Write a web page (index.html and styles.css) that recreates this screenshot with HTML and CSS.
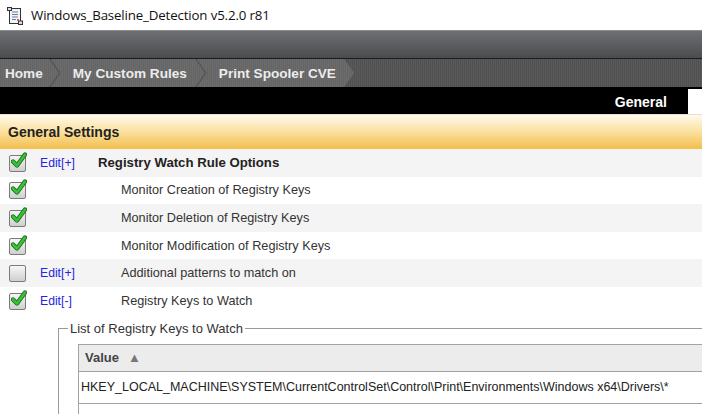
FILE: index.html
```html
<!DOCTYPE html>
<html>
<head>
<meta charset="utf-8">
<link rel="stylesheet" href="styles.css">
</head>
<body>
<div class="titlebar">
  <svg class="app-icon" width="16" height="18" viewBox="0 0 16 18">
    <rect x="2.5" y="1.5" width="11" height="15" fill="#f4f4f4" stroke="#333" stroke-width="1"/>
    <rect x="0.5" y="0.5" width="4" height="3" fill="#ddd" stroke="#333" stroke-width="1"/>
    <rect x="11.5" y="14" width="4" height="3.5" fill="#ddd" stroke="#333" stroke-width="1"/>
    <path d="M5 5h6M5 7.5h6M5 10h6M5 12.5h4" stroke="#6a7fa8" stroke-width="1"/>
    <circle cx="11" cy="13" r="1" fill="#c33"/>
  </svg>
  <span class="title">Windows_Baseline_Detection v5.2.0 r81</span>
</div>
<div class="toolbar"></div>
<nav class="crumbs">
  <span class="crumb first">Home</span>
  <span class="crumb">My Custom Rules</span>
  <span class="crumb">Print Spooler CVE</span>
</nav>
<div class="tabs">
  <span class="tab">General</span>
  <span class="tab-active"></span>
</div>
<div class="section-head">General Settings</div>
<div class="rows">
  <div class="row odd">
    <span class="check on"></span><span class="edit">Edit[+]</span><span class="label strong">Registry Watch Rule Options</span>
  </div>
  <div class="row">
    <span class="check on"></span><span class="edit"></span><span class="label indent">Monitor Creation of Registry Keys</span>
  </div>
  <div class="row odd">
    <span class="check on"></span><span class="edit"></span><span class="label indent">Monitor Deletion of Registry Keys</span>
  </div>
  <div class="row">
    <span class="check on"></span><span class="edit"></span><span class="label indent">Monitor Modification of Registry Keys</span>
  </div>
  <div class="row odd">
    <span class="check"></span><span class="edit">Edit[+]</span><span class="label indent">Additional patterns to match on</span>
  </div>
  <div class="row">
    <span class="check on"></span><span class="edit">Edit[-]</span><span class="label indent">Registry Keys to Watch</span>
  </div>
</div>
<fieldset class="keys">
  <legend>List of Registry Keys to Watch</legend>
  <div class="table">
    <div class="thead">Value <span class="sort">&#9650;</span></div>
    <div class="tcell">HKEY_LOCAL_MACHINE\SYSTEM\CurrentControlSet\Control\Print\Environments\Windows x64\Drivers\*</div>
    <div class="tcell empty"></div>
  </div>
</fieldset>
</body>
</html>
```
FILE: styles.css
```css
html, body {
  margin: 0;
  padding: 0;
  width: 702px;
  height: 414px;
  overflow: hidden;
  background: #fff;
  font-family: "Liberation Sans", Arial, sans-serif;
  font-size: 12px;
  color: #333;
}

.titlebar {
  height: 30px;
  display: flex;
  align-items: center;
  gap: 8px;
  padding-left: 7px;
  background: #fff;
}
.app-icon { flex: none; margin-top: 1px; }
.title {
  font-family: "Open Sans", "Noto Sans", sans-serif;
  font-size: 13.3px;
  color: #111;
  letter-spacing: -0.15px;
}

.toolbar {
  height: 27px;
  border-top: 1px solid #8a8c8e;
  background: linear-gradient(#6d6f72, #4b4c4e);
  border-bottom: 1px solid #1c1c1c;
}

.crumbs {
  height: 28px;
  display: flex;
  background-color: #545454;
  background-image: repeating-linear-gradient(90deg, #505050 0 1px, #5a5a5a 1px 2px);
}
.crumb {
  display: flex;
  align-items: center;
  height: 28px;
  padding: 0 18px 0 22px;
  margin-left: -8px;
  font-weight: bold;
  font-size: 13.6px;
  color: #ececec;
  background-color: #686868;
  background-image: repeating-linear-gradient(90deg, #656565 0 1px, #6c6c6c 1px 2px);
  clip-path: polygon(0 0, calc(100% - 10px) 0, 100% 50%, calc(100% - 10px) 100%, 0 100%, 10px 50%);
}
.crumb.first {
  margin-left: 0;
  padding-left: 5px;
  padding-right: 16px;
  clip-path: polygon(0 0, calc(100% - 10px) 0, 100% 50%, calc(100% - 10px) 100%, 0 100%);
}

.tabs {
  height: 27px;
  background: #000;
  display: flex;
  justify-content: flex-end;
  align-items: flex-end;
}
.tab {
  align-self: center;
  color: #fff;
  font-weight: bold;
  font-size: 14px;
  margin-right: 21px;
  margin-top: 2px;
}
.tab-active {
  width: 14px;
  height: 25px;
  background: #fff;
}

.section-head {
  height: 34px;
  display: flex;
  align-items: center;
  padding-left: 8px;
  font-weight: bold;
  font-size: 14px;
  color: #222;
  background: linear-gradient(#fffaec 0%, #fbe3a6 45%, #f3be4c 100%);
  border-top: 1px solid #e8e0cc;
}

.rows { display: flex; flex-direction: column; }
.row {
  height: 27.6px;
  display: flex;
  align-items: center;
  background: #fff;
}
.row.odd { background: #f4f4f4; }

.check {
  position: relative;
  width: 15px;
  height: 15px;
  margin-left: 9px;
  margin-top: 1px;
  border: 1px solid #7b7b7b;
  border-radius: 2px;
  background: linear-gradient(#f6f6f6, #cfcfcf);
  flex: none;
}
.check.on::after {
  content: "";
  position: absolute;
  left: 1px;
  top: -4px;
  width: 16px;
  height: 17px;
  background: url("data:image/svg+xml;utf8,<svg xmlns='http://www.w3.org/2000/svg' width='16' height='17' viewBox='0 0 16 17'><path d='M2 9.5 L6 13.5 L14 2.5' fill='none' stroke='%23226b22' stroke-width='4.4' stroke-linecap='round' stroke-linejoin='round'/><path d='M2 9.5 L6 13.5 L14 2.5' fill='none' stroke='%2336c436' stroke-width='2.6' stroke-linecap='round' stroke-linejoin='round'/></svg>") no-repeat;
}

.edit {
  width: 58px;
  margin-left: 14px;
  color: #2525e0;
  flex: none;
  font-size: 12.2px;
}
.label { color: #333; font-size: 12.7px; }
.label.strong { font-weight: bold; font-size: 13.2px; color: #222; }
.label.indent { margin-left: 23px; }

.keys {
  margin: 6px 0 0 58px;
  padding: 8px 0 0 19px;
  width: 700px;
  border: 1px solid #9a9a9a;
  border-right: none;
  border-bottom: none;
}
.keys legend {
  padding: 0 2px;
  margin-left: -10px;
  color: #333;
  font-size: 13px;
}
.table {
  border: 1px solid #a2a2a2;
  border-right: none;
}
.thead {
  height: 26px;
  display: flex;
  align-items: center;
  padding-left: 6px;
  gap: 9px;
  font-weight: bold;
  font-size: 13px;
  color: #444;
  background: #ececec;
  border-bottom: 1px solid #a2a2a2;
}
.sort { font-size: 13px; color: #777; font-weight: normal; }
.tcell {
  height: 31px;
  display: flex;
  align-items: center;
  padding-left: 2px;
  color: #222;
  font-size: 12.5px;
  border-bottom: 1px solid #a2a2a2;
  white-space: nowrap;
}
.tcell.empty { border-bottom: none; }
```
